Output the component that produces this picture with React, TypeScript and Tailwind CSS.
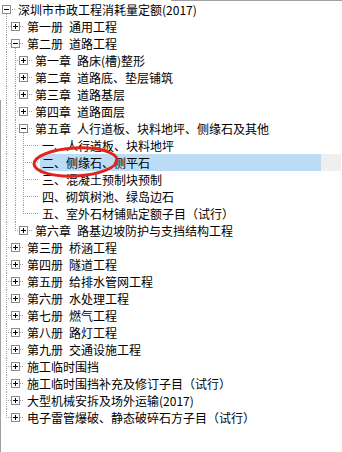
type Kind = "plus" | "minus" | "leaf";

interface ITreeNode {
    level: number;
    kind: Kind;
    label: string;
    last?: boolean;
    pass: number[];
    selected?: boolean;
}

// x des boutons par niveau (coordonnées de la ligne, bordure gauche exclue)
const BX = [5, 14, 22];
const TX = [17, 26, 34, 41];
const LINE = "#a0a0a0";
const S = "\u2002";

const nodes: ITreeNode[] = [
    { level: 0, kind: "minus", label: "深圳市市政工程消耗量定额(2017)", pass: [] },
    { level: 1, kind: "plus", label: `第一册${S}通用工程`, pass: [] },
    { level: 1, kind: "minus", label: `第二册${S}道路工程`, pass: [] },
    { level: 2, kind: "plus", label: `第一章${S}路床(槽)整形`, pass: [BX[0]] },
    { level: 2, kind: "plus", label: `第二章${S}道路底、垫层铺筑`, pass: [BX[0]] },
    { level: 2, kind: "plus", label: `第三章${S}道路基层`, pass: [BX[0]] },
    { level: 2, kind: "plus", label: `第四章${S}道路面层`, pass: [BX[0]] },
    { level: 2, kind: "minus", label: `第五章${S}人行道板、块料地坪、侧缘石及其他`, pass: [BX[0]] },
    { level: 3, kind: "leaf", label: "一、人行道板、块料地坪", pass: [BX[0], BX[1]] },
    { level: 3, kind: "leaf", label: "二、侧缘石、侧平石", pass: [BX[0], BX[1]], selected: true },
    { level: 3, kind: "leaf", label: "三、混凝土预制块预制", pass: [BX[0], BX[1]] },
    { level: 3, kind: "leaf", label: "四、砌筑树池、绿岛边石", pass: [BX[0], BX[1]] },
    { level: 3, kind: "leaf", label: "五、室外石材铺贴定额子目（试行）", pass: [BX[0], BX[1]], last: true },
    { level: 2, kind: "plus", label: `第六章${S}路基边坡防护与支挡结构工程`, pass: [BX[0]], last: true },
    { level: 1, kind: "plus", label: `第三册${S}桥涵工程`, pass: [] },
    { level: 1, kind: "plus", label: `第四册${S}隧道工程`, pass: [] },
    { level: 1, kind: "plus", label: `第五册${S}给排水管网工程`, pass: [] },
    { level: 1, kind: "plus", label: `第六册${S}水处理工程`, pass: [] },
    { level: 1, kind: "plus", label: `第七册${S}燃气工程`, pass: [] },
    { level: 1, kind: "plus", label: `第八册${S}路灯工程`, pass: [] },
    { level: 1, kind: "plus", label: `第九册${S}交通设施工程`, pass: [] },
    { level: 1, kind: "plus", label: "施工临时围挡", pass: [] },
    { level: 1, kind: "plus", label: "施工临时围挡补充及修订子目（试行）", pass: [] },
    { level: 1, kind: "plus", label: "大型机械安拆及场外运输(2017)", pass: [] },
    { level: 1, kind: "plus", label: "电子雷管爆破、静态破碎石方子目（试行）", pass: [], last: true },
];

function Dotted({ x1, y1, x2, y2 }: { x1: number; y1: number; x2: number; y2: number }) {
    return (
        <line
            x1={x1}
            y1={y1}
            x2={x2}
            y2={y2}
            stroke={LINE}
            strokeWidth={1}
            strokeDasharray="1 1"
            shapeRendering="crispEdges"
        />
    );
}

function ToggleBox({ cx, open }: { cx: number; open: boolean }) {
    return (
        <g shapeRendering="crispEdges">
            <rect x={cx - 3.5} y={4.5} width={8} height={8} fill="#fff" stroke="#8a8a8a" />
            <line x1={cx - 2} y1={8.5} x2={cx + 3} y2={8.5} stroke="#000" />
            {!open && <line x1={cx + 0.5} y1={6} x2={cx + 0.5} y2={11} stroke="#000" />}
        </g>
    );
}

function TreeRow({ node }: { node: ITreeNode }) {
    const tx = TX[node.level];
    const w = tx - 2;
    const own = node.level > 0 ? BX[node.level - 1] : BX[0];

    return (
        <div className="flex h-[17px] items-stretch">
            <svg width={w} height={17} className="shrink-0">
                {node.pass.map((x) => (
                    <Dotted key={x} x1={x + 0.5} y1={0} x2={x + 0.5} y2={17} />
                ))}
                {node.level > 0 && (
                    <Dotted x1={own + 0.5} y1={0} x2={own + 0.5} y2={node.last ? 9 : 17} />
                )}
                <Dotted x1={own} y1={8.5} x2={w - 1} y2={8.5} />
                {node.kind === "minus" && (
                    <Dotted x1={BX[node.level] + 0.5} y1={9} x2={BX[node.level] + 0.5} y2={17} />
                )}
                {node.kind !== "leaf" && <ToggleBox cx={BX[node.level]} open={node.kind === "minus"} />}
            </svg>
            {node.selected ? (
                <>
                    <span className="w-[281px] shrink-0 bg-[#bcdbf5] pl-[2px] whitespace-nowrap">
                        {node.label}
                    </span>
                    <span className="w-[20px] shrink-0 bg-[#efefef]" />
                </>
            ) : (
                <span className="pl-[2px] whitespace-nowrap">{node.label}</span>
            )}
        </div>
    );
}

export default function App() {
    return (
        <div className="relative h-[452px] w-[342px] overflow-hidden bg-white text-[12px] leading-[17px] text-black [font-family:'Noto_Sans_CJK_SC','Noto_Sans',sans-serif]">
            <div className="flex h-px">
                <div className="w-[171px]" />
                <div className="flex-1 bg-[#a0a0a0]" />
            </div>
            <div className="flex h-[451px]">
                <div className="flex w-px flex-col">
                    <div className="h-[99px]" />
                    <div className="flex-1 bg-[#a0a0a0]" />
                </div>
                <div className="flex-1">
                    {nodes.map((n, i) => (
                        <TreeRow key={i} node={n} />
                    ))}
                </div>
            </div>

            {/* annotation rouge par-dessus la liste */}
            <svg className="pointer-events-none absolute inset-0" width={342} height={452}>
                <ellipse
                    cx={75.5}
                    cy={162}
                    rx={41.5}
                    ry={14}
                    fill="none"
                    stroke="#e3241b"
                    strokeWidth={3}
                    transform="rotate(-3 75.5 162)"
                />
            </svg>
        </div>
    );
}
